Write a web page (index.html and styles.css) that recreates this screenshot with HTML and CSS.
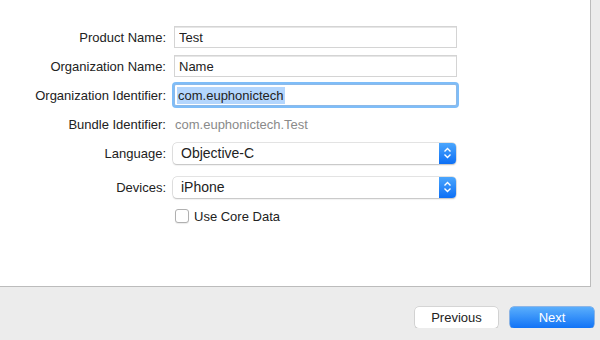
FILE: index.html
```html
<!DOCTYPE html>
<html lang="en">

<head>
    <meta charset="UTF-8">
    <meta name="viewport" content="width=device-width, initial-scale=1.0">
    <title>Choose options for your new project</title>
    <link rel="stylesheet" href="styles.css">
</head>

<body>
    <div class="panel">
        <form class="options" onsubmit="return false">
            <div class="row">
                <label class="label" for="product">Product Name:</label>
                <input class="field" type="text" id="product" value="Test">
            </div>
            <div class="row">
                <label class="label" for="org">Organization Name:</label>
                <input class="field" type="text" id="org" value="Name">
            </div>
            <div class="row">
                <label class="label" for="orgid">Organization Identifier:</label>
                <div class="field focused"><span class="selected">com.euphonictech</span></div>
            </div>
            <div class="row row-bundle">
                <span class="label">Bundle Identifier:</span>
                <span class="value">com.euphonictech.Test</span>
            </div>
            <div class="row row-language">
                <span class="label">Language:</span>
                <div class="popup">
                    <span class="popup-text">Objective-C</span>
                    <span class="stepper">
                        <svg width="9" height="12" viewBox="0 0 9 12">
                            <path d="M1.5 4.5 L4.5 1.5 L7.5 4.5 M1.5 7.5 L4.5 10.5 L7.5 7.5" fill="none" stroke="#fff" stroke-width="1.4"/>
                        </svg>
                    </span>
                </div>
            </div>
            <div class="row row-devices">
                <span class="label">Devices:</span>
                <div class="popup">
                    <span class="popup-text">iPhone</span>
                    <span class="stepper">
                        <svg width="9" height="12" viewBox="0 0 9 12">
                            <path d="M1.5 4.5 L4.5 1.5 L7.5 4.5 M1.5 7.5 L4.5 10.5 L7.5 7.5" fill="none" stroke="#fff" stroke-width="1.4"/>
                        </svg>
                    </span>
                </div>
            </div>
            <div class="row row-check">
                <span class="label"></span>
                <label class="check"><span class="box"></span>Use Core Data</label>
            </div>
        </form>
    </div>

    <div class="footer">
        <button class="btn">Previous</button>
        <button class="btn btn-primary">Next</button>
    </div>
</body>
</html>
```

FILE: styles.css
```css
body {
    font-family: "Liberation Sans", Arial, sans-serif;
    font-size: 13px;
    background-color: #ececec;
    color: #222;
    margin: 0;
    padding: 0;
}

.panel {
    width: 591px;
    height: 287px;
    background-color: #fff;
    border-right: 1px solid #bcbcbc;
    border-bottom: 1px solid #bcbcbc;
    box-sizing: border-box;
}

.options {
    padding-top: 26px;
}

.row {
    display: flex;
    align-items: center;
    height: 22px;
    margin-bottom: 7px;
}

.label {
    width: 166px;
    padding-right: 8px;
    text-align: right;
    color: #222;
    flex-shrink: 0;
}

.field {
    width: 283px;
    height: 22px;
    box-sizing: border-box;
    border: 1px solid #d4d4d4;
    box-shadow: inset 0 1px 0 #e6e6e6;
    padding: 0 4px;
    font-family: inherit;
    font-size: 13px;
    color: #222;
    background: #fff;
    display: flex;
    align-items: center;
}

input.field:focus {
    outline: none;
}

.focused {
    border: 1px solid #8cb9e8;
    box-shadow: 0 0 0 2px #7fbdf8;
    border-radius: 2px;
    padding-left: 2px;
}

.selected {
    background-color: #b4d6fd;
    padding: 1px 1px;
}

.row-bundle {
    height: 20px;
    margin-top: 8px;
    margin-bottom: 8px;
}

.value {
    color: #8a8a8a;
    padding-left: 1px;
}

.popup {
    width: 283px;
    height: 21px;
    box-sizing: border-box;
    display: flex;
    align-items: stretch;
    background: #fff;
    border-radius: 4px;
    box-shadow: 0 0 0 0.5px #c8c8c8, 0 1px 1.5px rgba(0, 0, 0, 0.25);
    margin-left: -1px;
}

.popup-text {
    flex: 1;
    display: flex;
    align-items: center;
    padding-left: 8px;
    font-size: 14px;
    color: #222;
}

.stepper {
    width: 17px;
    display: flex;
    align-items: center;
    justify-content: center;
    border-radius: 0 4px 4px 0;
    background: linear-gradient(#4ba6fd, #0d6ff5);
}

.row-devices {
    margin-top: 12px;
}

.row-check {
    height: 16px;
    margin-top: 10px;
}

.check {
    display: flex;
    align-items: center;
    font-size: 13px;
    color: #222;
}

.box {
    width: 12px;
    height: 12px;
    border: 1px solid #b0b0b0;
    border-radius: 3px;
    background: #fff;
    margin-left: 1px;
    margin-right: 5px;
    box-shadow: 0 1px 1px rgba(0, 0, 0, 0.08);
}

.footer {
    display: flex;
    justify-content: flex-end;
    gap: 12px;
    padding: 20px 6px 0 0;
}

.btn {
    width: 83px;
    height: 21px;
    font-family: inherit;
    font-size: 13px;
    color: #222;
    background: #fff;
    border: none;
    border-radius: 4px;
    box-shadow: 0 0 0 0.5px #bdbdbd, 0 1px 1px rgba(0, 0, 0, 0.2);
    padding: 0;
}

.btn-primary {
    width: 84px;
    color: #fff;
    background: linear-gradient(#5aaefc, #1173f6);
    box-shadow: 0 0 0 0.5px #2f7fe0, 0 1px 1px rgba(0, 0, 0, 0.15);
}
```
